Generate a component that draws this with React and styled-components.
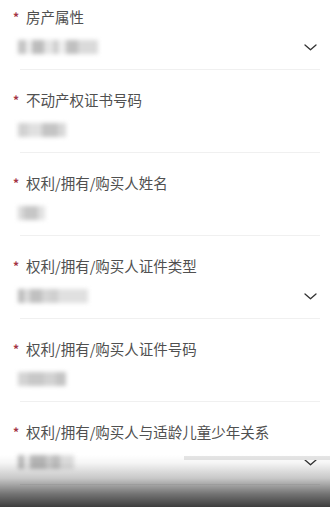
import React from "react";
import styled, { createGlobalStyle } from "styled-components";

const Global = createGlobalStyle`
  html, body { margin: 0; padding: 0; background: #fff; }
  body {
    width: 330px; height: 507px; overflow: hidden;
    font-family: "Noto Sans CJK SC", "Noto Sans", sans-serif;
  }
`;

const Page = styled.div`
  position: relative;
  width: 330px;
  height: 507px;
  overflow: hidden;
  background: #fff;
`;

const Form = styled.div`
  display: flex;
  flex-direction: column;
  padding: 0 10px 0 12px;
`;

const Field = styled.div`
  display: flex;
  flex-direction: column;
  height: 83px;
  box-sizing: border-box;
  padding-top: 7px;
`;

const Label = styled.div`
  display: flex;
  align-items: center;
  height: 20px;
  font-size: 14.5px;
  line-height: 20px;
  color: #505050;
  white-space: nowrap;
`;

const Star = styled.span`
  width: 13px;
  font-size: 12px;
  font-weight: bold;
  color: #a33344;
  align-self: flex-start;
  line-height: 16px;
  padding-top: 2px;
  padding-left: 1px;
`;

const ValueRow = styled.div`
  display: flex;
  align-items: center;
  justify-content: space-between;
  height: 24px;
  margin-top: 8px;
  padding-left: 6px;
`;

const Blur = styled.div`
  display: flex;
  height: 14px;
  filter: blur(2.2px);
`;

const Seg = styled.span`
  display: block;
  height: 100%;
  background: ${(p) => p.$c};
`;

const Divider = styled.div`
  margin: 10px 0 0 8px;
  height: 1px;
  background: #f0f0f0;
`;

const Chevron = styled.svg`
  width: 13px;
  height: 7px;
  margin-right: 3px;
`;

const Shade = styled.div`
  position: absolute;
  left: 0;
  right: 0;
  bottom: 0;
  height: 52px;
  background: linear-gradient(
    to bottom,
    rgba(0, 0, 0, 0) 0%,
    rgba(0, 0, 0, 0.04) 15%,
    rgba(0, 0, 0, 0.22) 45%,
    rgba(0, 0, 0, 0.55) 75%,
    rgba(0, 0, 0, 0.76) 100%
  );
`;

const Band = styled.div`
  position: absolute;
  left: 184px;
  right: 0;
  top: 456px;
  height: 4px;
  background: #e6e6e6;
`;

const fields = [
  { label: "房产属性", select: true, segs: [[8, "#c4c4c4"], [6, "#eee"], [12, "#bcbcbc"], [10, "#e4e4e4"], [4, "#c8c8c8"], [8, "#eee"], [12, "#c0c0c0"], [20, "#dadada"]] },
  { label: "不动产权证书号码", segs: [[10, "#d2d2d2"], [14, "#e0e0e0"], [16, "#c4c4c4"], [8, "#d8d8d8"]] },
  { label: "权利/拥有/购买人姓名", segs: [[6, "#dadada"], [14, "#c6c6c6"], [7, "#e2e2e2"]] },
  { label: "权利/拥有/购买人证件类型", select: true, segs: [[6, "#bdbdbd"], [6, "#dcdcdc"], [12, "#c0c0c0"], [8, "#d6d6d6"], [8, "#cfcfcf"], [30, "#e0e0e0"]] },
  { label: "权利/拥有/购买人证件号码", segs: [[10, "#d4d4d4"], [16, "#c8c8c8"], [12, "#d2d2d2"], [10, "#c4c4c4"]] },
  { label: "权利/拥有/购买人与适龄儿童少年关系", select: true, segs: [[6, "#bbb"], [6, "#eee"], [16, "#b8b8b8"], [6, "#d0d0d0"], [8, "#c0c0c0"], [14, "#e0e0e0"]] },
];

export default function App() {
  return (
    <Page>
      <Global />
      <Form>
        {fields.map((f) => (
          <Field key={f.label}>
            <Label>
              <Star>*</Star>
              {f.label}
            </Label>
            <ValueRow>
              <Blur>
                {f.segs.map(([w, c], i) => (
                  <Seg key={i} $c={c} style={{ width: w }} />
                ))}
              </Blur>
              {f.select && (
                <Chevron viewBox="0 0 13 7">
                  <polyline points="1,1 6.5,5.8 12,1" fill="none" stroke="#333" strokeWidth="1.3" strokeLinecap="round" strokeLinejoin="round" />
                </Chevron>
              )}
            </ValueRow>
            <Divider />
          </Field>
        ))}
      </Form>
      <Band />
      <Shade />
    </Page>
  );
}
